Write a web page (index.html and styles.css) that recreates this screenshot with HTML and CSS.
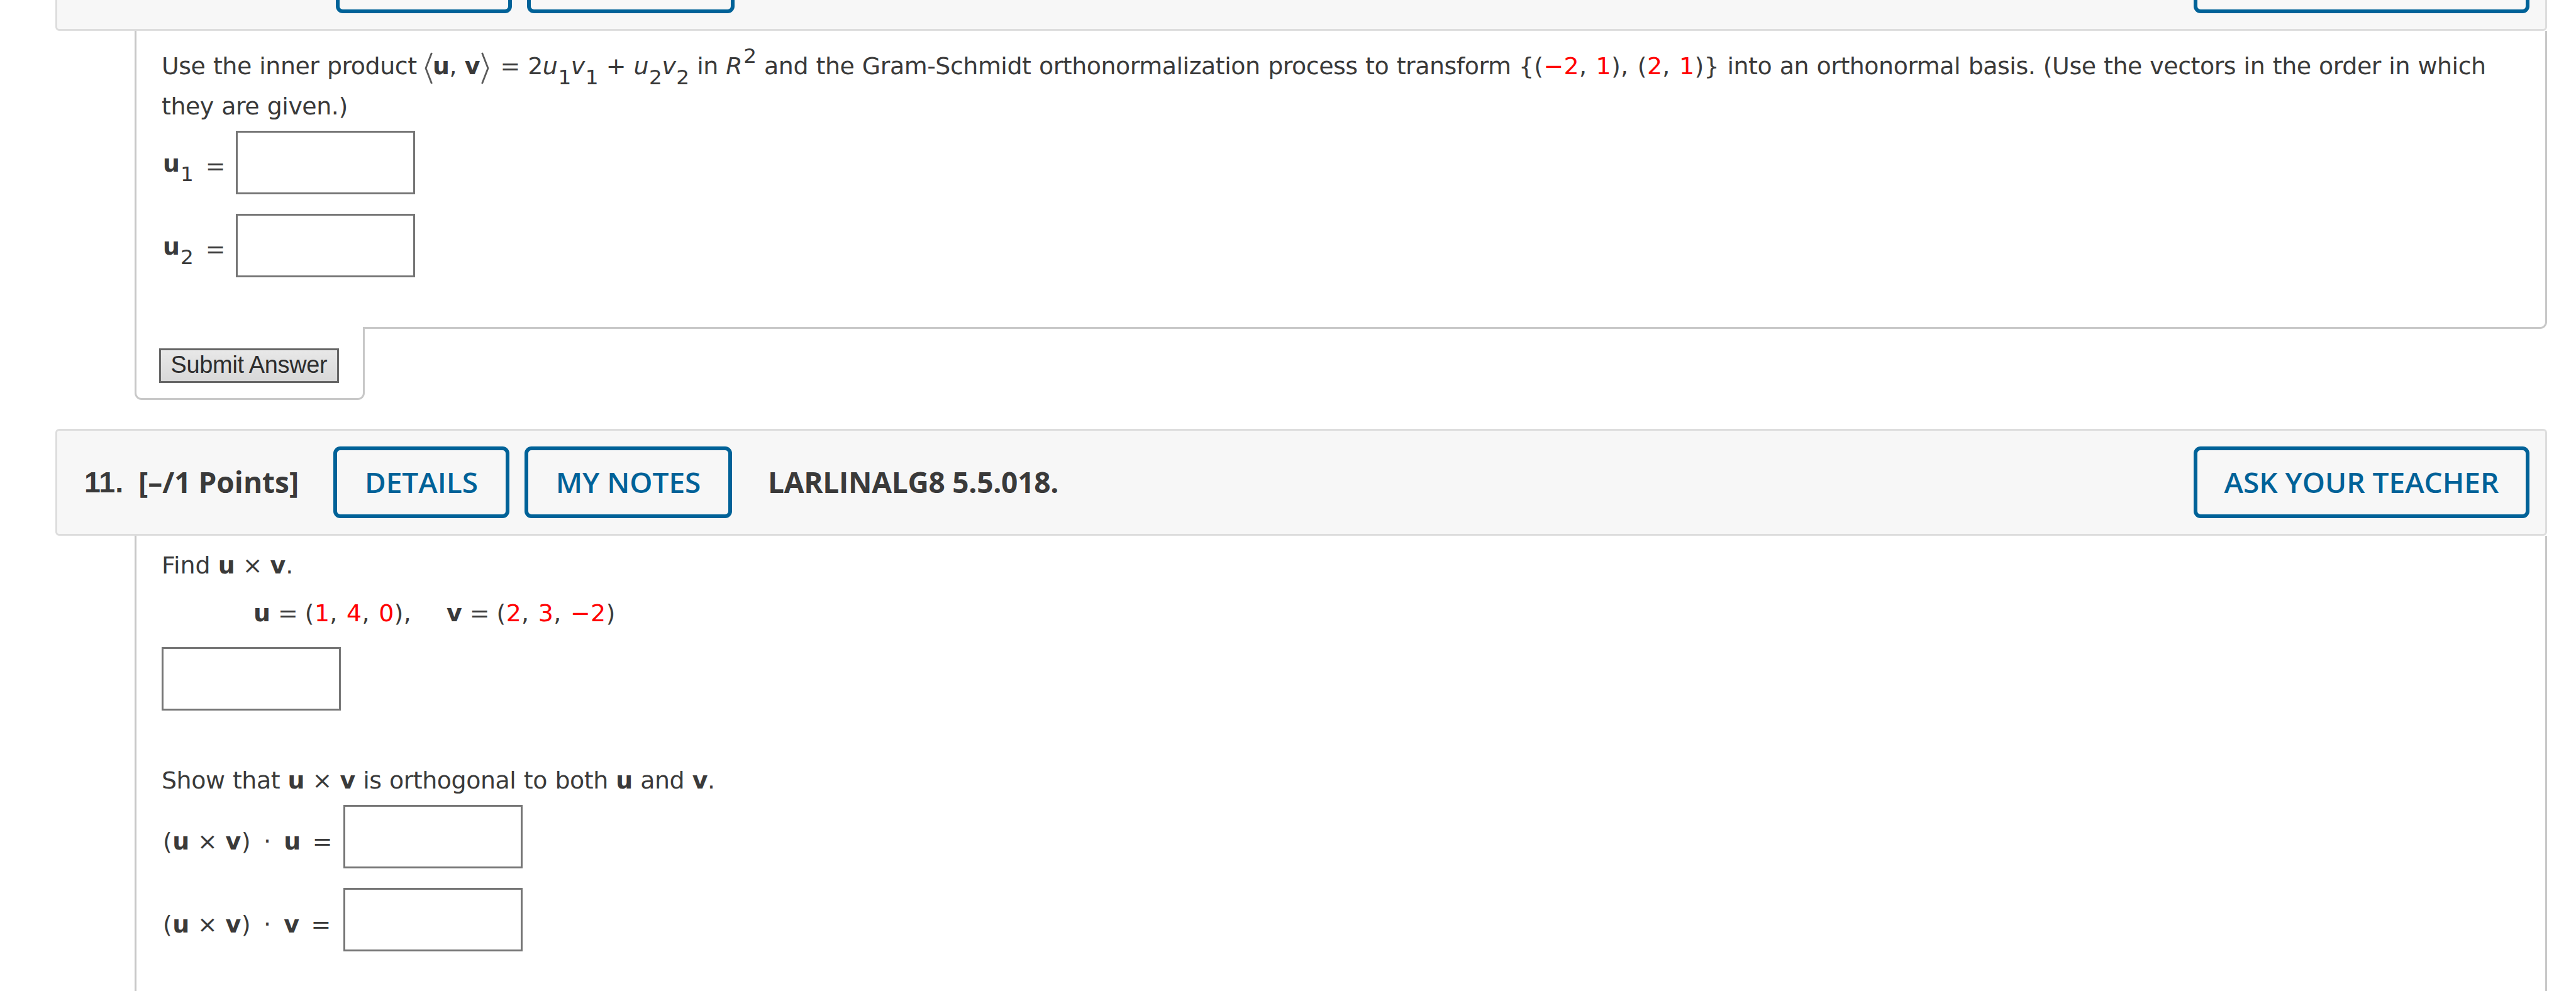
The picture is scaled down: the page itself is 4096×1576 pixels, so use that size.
FILE: index.html
```
<!DOCTYPE html>
<html lang="en">
<head>
    <meta charset="UTF-8">
    <meta name="viewport" content="width=device-width, initial-scale=1.0">
    <title>Assignment</title>
    <link rel="stylesheet" href="styles.css">
</head>
<body>
    <div class="question">
        <div class="header header-cut">
            <button class="btn details"></button>
            <button class="btn notes"></button>
            <button class="btn ask"></button>
        </div>
        <div class="content">
            <p class="text prose">Use the inner product <svg class="angle" viewBox="0 0 13 51"><path d="M11.5 1 L2 25.5 L11.5 50"/></svg><b>u</b>, <b>v</b><svg class="angle angle-right" viewBox="0 0 13 51"><path d="M1.5 1 L11 25.5 L1.5 50"/></svg> = 2<i>u</i><sub>1</sub><i>v</i><sub>1</sub> + <i>u</i><sub>2</sub><i>v</i><sub>2</sub> in <i>R</i><sup>2</sup> and the Gram-Schmidt orthonormalization process to transform <span class="tuple">{(<span class="red">−2</span>, <span class="red">1</span>), (<span class="red">2</span>, <span class="red">1</span>)}</span> into an orthonormal basis. (Use the vectors in the order in which they are given.)</p>
            <div class="row">
                <span class="label short"><b>u</b><sub>1</sub><span class="eq">=</span></span>
                <input type="text" class="answer">
            </div>
            <div class="row">
                <span class="label short"><b>u</b><sub>2</sub><span class="eq">=</span></span>
                <input type="text" class="answer">
            </div>
        </div>
        <div class="submit-tab">
            <button class="submit">Submit Answer</button>
        </div>
    </div>

    <div class="question">
        <div class="header">
            <span class="number">11.</span>
            <span class="points">[–/1 Points]</span>
            <button class="btn details">DETAILS</button>
            <button class="btn notes">MY NOTES</button>
            <span class="code">LARLINALG8 5.5.018.</span>
            <button class="btn ask">ASK YOUR TEACHER</button>
        </div>
        <div class="content content-open">
            <p class="text">Find <b>u</b> × <b>v</b>.</p>
            <p class="text vectors"><b>u</b> = <span class="tuple">(<span class="red">1</span>, <span class="red">4</span>, <span class="red">0</span>),</span><span class="space"></span><b>v</b> = <span class="tuple">(<span class="red">2</span>, <span class="red">3</span>, <span class="red">−2</span>)</span></p>
            <input type="text" class="answer single">
            <p class="text prose show">Show that <b>u</b> × <b>v</b> is orthogonal to both <b>u</b> and <b>v</b>.</p>
            <div class="row">
                <span class="label long">(<b>u</b> × <b>v</b>)<span class="dot">·</span><b>u</b><span class="eq">=</span></span>
                <input type="text" class="answer">
            </div>
            <div class="row">
                <span class="label long">(<b>u</b> × <b>v</b>)<span class="dot">·</span><b>v</b><span class="eq">=</span></span>
                <input type="text" class="answer">
            </div>
        </div>
    </div>
</body>
</html>
```
FILE: styles.css
```
* {
    box-sizing: border-box;
}
body {
    margin: 0;
    height: 1576px;
    overflow: hidden;
    background-color: #fff;
    color: #3a3a3a;
    font-family: Verdana, "DejaVu Sans", sans-serif;
    font-size: 37.9px;
}
.question {
    width: 3962px;
    margin-left: 88px;
}
.header {
    display: flex;
    align-items: center;
    height: 170px;
    padding: 0 25px 0 43px;
    border: 3px solid #ddd;
    border-radius: 6px;
    background-color: #f7f7f7;
    font-family: "Open Sans", sans-serif;
    font-size: 46px;
    font-weight: 700;
}
.header-cut {
    margin-top: -121px;
    padding-left: 443px;
}
.number {
    width: 86px;
    padding-bottom: 1px;
    font-family: Helvetica, Arial, "Liberation Sans", sans-serif;
    font-size: 46.5px;
}
.points {
    width: 310px;
    padding-bottom: 2px;
    white-space: nowrap;
}
.btn {
    height: 114px;
    padding: 0 0 2px;
    border: 6px solid #006298;
    border-radius: 11px;
    background: none;
    color: #006298;
    font: inherit;
    font-weight: 600;
    white-space: nowrap;
}
.details {
    width: 280px;
}
.notes {
    width: 330px;
    margin-left: 24px;
}
.code {
    margin-left: 57px;
    padding-bottom: 2px;
    letter-spacing: -0.25px;
}
.ask {
    width: 534px;
    margin-left: auto;
}
.content {
    height: 474px;
    margin-left: 126px;
    padding: 24px 43px 0 40px;
    border: 3px solid #c8c8c8;
    border-top: none;
    border-bottom-right-radius: 11px;
}
.content-open {
    height: 760px;
    padding-top: 15px;
    border-bottom: none;
}
.text {
    margin: 0;
    line-height: 64px;
}
.prose {
    letter-spacing: -0.45px;
    word-spacing: 0.9px;
}
sub, sup {
    font-size: 32.7px;
    line-height: 0;
}
sub {
    margin-left: 1px;
    vertical-align: -15.5px;
}
sup {
    margin-left: 2px;
    vertical-align: 17.8px;
}
.red {
    color: #f00;
}
.tuple {
    letter-spacing: 0.3px;
    word-spacing: 2px;
}
.angle {
    width: 13px;
    height: 51px;
    margin: -10px 0;
    vertical-align: -5.5px;
    fill: none;
    stroke: #5a5a5a;
    stroke-width: 2.8;
}
.angle-right {
    margin: -10px 5px -10px 2px;
}
.row {
    display: flex;
    align-items: center;
    margin-top: 7px;
}
.row + .row {
    margin-top: 31px;
}
.label {
    padding: 2px 0 0 2px;
    line-height: 64px;
    white-space: nowrap;
}
.short {
    width: 118px;
}
.short .eq {
    margin-left: 19px;
    line-height: 0;
    vertical-align: -4px;
}
.long {
    width: 289px;
    padding-top: 15px;
    letter-spacing: 0.4px;
}
.long .eq {
    margin-left: 18px;
}
.dot {
    margin: 0 20px;
}
.answer {
    display: block;
    width: 285px;
    height: 101px;
    border: 3px solid #767676;
    border-radius: 0;
    background-color: #fff;
}
.submit-tab {
    width: 366px;
    height: 116px;
    margin: -3px 0 46px 126px;
    padding: 34px 0 0 36px;
    border: 3px solid #c8c8c8;
    border-top: none;
    border-radius: 0 0 11px 11px;
    background-color: #fff;
}
.submit {
    display: block;
    width: 286px;
    height: 55px;
    padding: 0 0 3px;
    border: 3px solid #666;
    border-radius: 0;
    background: linear-gradient(#e8e8e8, #d8d8d8);
    color: #2d2d2d;
    font-family: Arial, "Liberation Sans", sans-serif;
    font-size: 37.9px;
    letter-spacing: -0.3px;
    line-height: 46px;
    white-space: nowrap;
}
.vectors {
    margin-top: 12px;
    padding-left: 146px;
}
.vectors .tuple {
    margin-left: -1px;
}
.space {
    margin-left: 56px;
}
.single {
    margin-top: 22px;
}
.show {
    margin-top: 79px;
}
```
